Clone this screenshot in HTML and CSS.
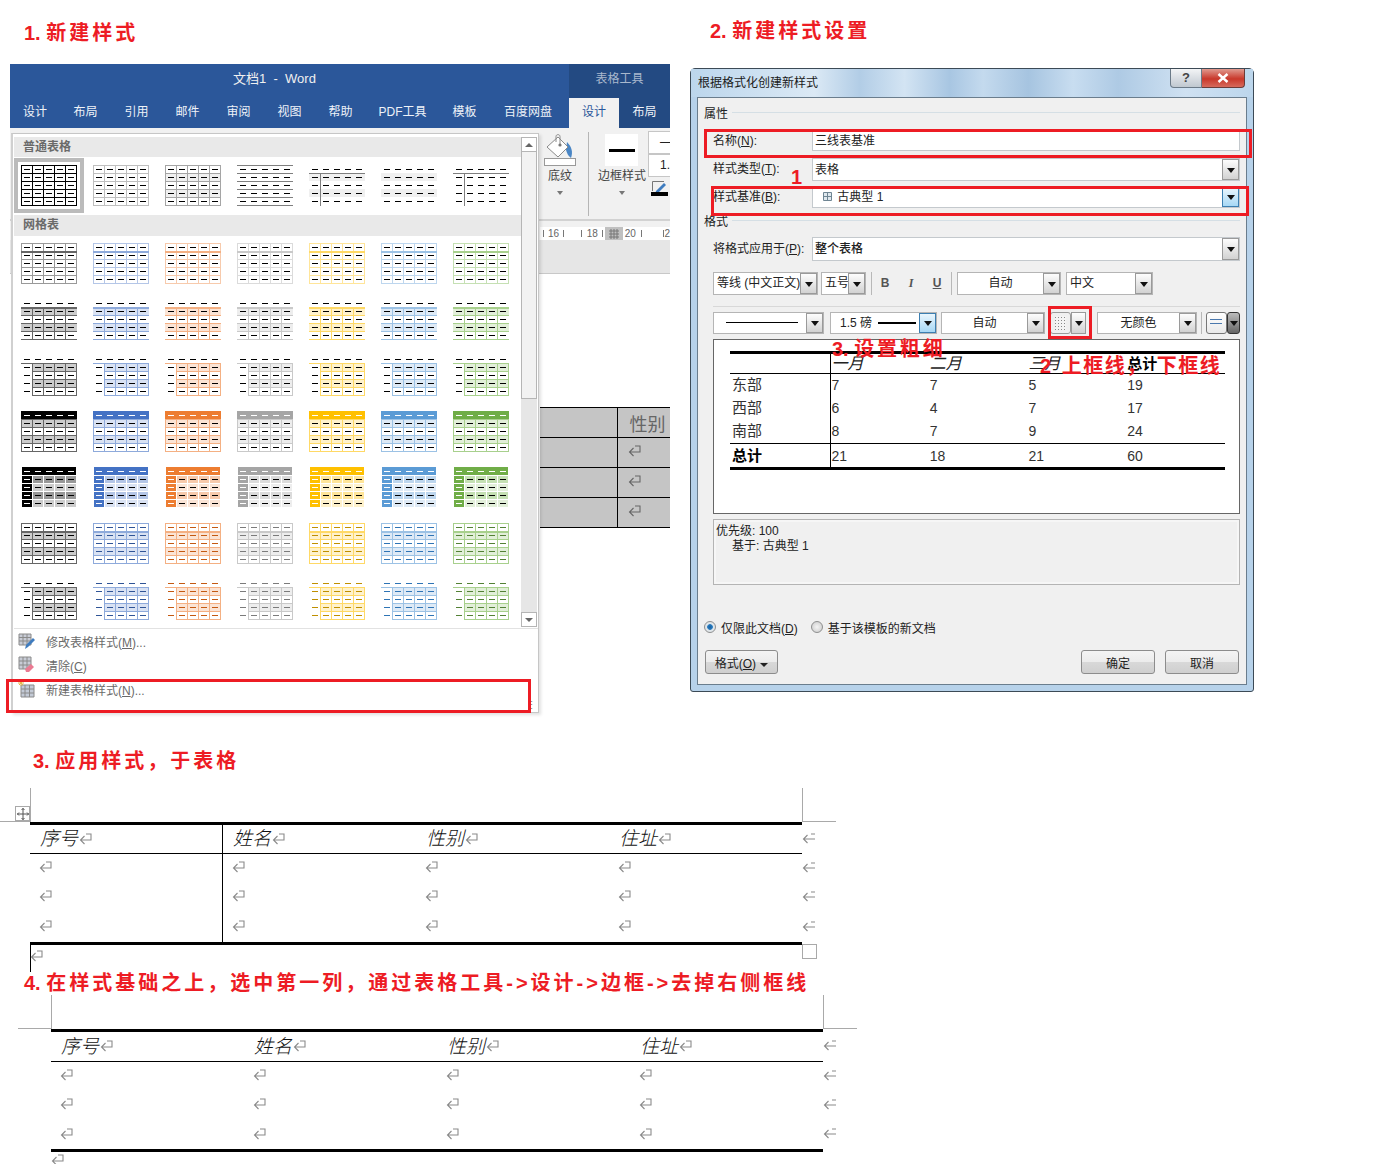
FILE: index.html
```html
<!DOCTYPE html>
<html lang="zh-CN">
<head>
  <meta charset="UTF-8">
  <title>三线表样式</title>
  <link rel="stylesheet" href="styles.css">
</head>
<body>

  <!-- shared icons -->
  <svg class="sprite" width="0" height="0">
    <symbol id="ret" viewBox="0 0 13 12"><path d="M7 1H12V7H1.5M5.5 3L1.5 7L5.5 11" fill="none" stroke="currentColor" stroke-width="1.1"/></symbol>
    <symbol id="ret-end" viewBox="0 0 13 12"><path d="M13 7H1.5M5.5 3L1.5 7L5.5 11M9 2H13" fill="none" stroke="currentColor" stroke-width="1.1"/></symbol>
  </svg>

  <div class="canvas">

    <h2 class="note note-1"><span class="num">1. </span>新建样式</h2>
    <h2 class="note note-2"><span class="num">2. </span>新建样式设置</h2>
    <h2 class="note note-3"><span class="num">3. </span>应用样式，于表格</h2>
    <h2 class="note note-4"><span class="num">4. </span>在样式基础之上，选中第一列，通过表格工具-&gt;设计-&gt;边框-&gt;去掉右侧框线</h2>

    <!-- Word 窗口 -->
    <div class="shot word">
      <div class="titlebar">
        <div class="doc-title">文档1&nbsp; - &nbsp;Word</div>
        <div class="tools-title">表格工具</div>
      </div>
      <div class="tabs">
        <span class="tab">设计</span>
        <span class="tab">布局</span>
        <span class="tab">引用</span>
        <span class="tab">邮件</span>
        <span class="tab">审阅</span>
        <span class="tab">视图</span>
        <span class="tab">帮助</span>
        <span class="tab tab-pdf">PDF工具</span>
        <span class="tab">模板</span>
        <span class="tab tab-pan">百度网盘</span>
        <span class="tab tab-active">设计</span>
        <span class="tab tab-dark">布局</span>
      </div>

      <div class="ribbon">
        <div class="rb-group rb-shade">
          <svg class="bucket" width="32" height="32" viewBox="0 0 32 32">
            <path d="M23 8C28 13 29 18 27 24C24 22 23 19 22 16Z" fill="#4a86c5"/>
            <path d="M14 3L24 13L14 23L3 13Z" fill="#fff" stroke="#8a8a8a"/>
            <path d="M12 8V2.5C12 0 16 0 16 2.5V11" fill="none" stroke="#8a8a8a"/>
            <circle cx="16" cy="11" r="1.6" fill="#777"/>
            <rect x="0.5" y="24.5" width="31" height="7" fill="#fff" stroke="#999"/>
          </svg>
          <span class="rb-label">底纹</span>
          <i class="rb-arrow"></i>
        </div>
        <div class="rb-sep"></div>
        <div class="rb-group rb-border">
          <div class="border-pick"><b></b></div>
          <span class="rb-label">边框样式</span>
          <i class="rb-arrow"></i>
        </div>
        <div class="rb-side">
          <div class="side-box">—</div>
          <div class="side-box">1.</div>
          <svg class="pen" width="17" height="17" viewBox="0 0 17 17">
            <path d="M1.5 11V1.5H13" fill="none" stroke="#777"/>
            <path d="M5 11L13 3L15 5L7 13L4 14Z" fill="#3f7cbf"/>
            <rect x="0" y="12" width="17" height="4" fill="#000"/>
          </svg>
        </div>
      </div>
      <div class="ruler">
        <div class="ruler-strip">
          <i class="tick t1"></i><span class="rl">16</span><i class="tick"></i><i class="tick t2"></i><span class="rl rl-b">18</span><i class="tick"></i>
          <span class="rl-box">
            <svg width="10" height="10" viewBox="0 0 10 10"><path d="M0 2H10M0 5H10M0 8H10M2 0V10M5 0V10M8 0V10" stroke="#777"/></svg>
          </span>
          <span class="rl rl-c">20</span><i class="tick t3"></i><i class="tick t4"></i><span class="rl rl-d">2</span>
        </div>
      </div>
      <div class="page-gap"></div>
      <div class="page">
        <table class="sel-table">
          <tr><td></td><td class="sel-big">性别</td></tr>
          <tr><td></td><td><svg class="ret"><use href="#ret"/></svg></td></tr>
          <tr><td></td><td><svg class="ret"><use href="#ret"/></svg></td></tr>
          <tr><td></td><td><svg class="ret"><use href="#ret"/></svg></td></tr>
        </table>
      </div>

      <!-- 表格样式下拉 -->
      <div class="gallery">
        <div class="gallery-main">
          <div class="gallery-list">
            <div class="band band-first">普通表格</div>
            <div class="plain-row" id="plainRow"></div>
            <div class="band">网格表</div>
            <div class="grid-rows" id="gridRows"></div>
          </div>
          <div class="scroll">
            <div class="scroll-btn"><i class="up"></i></div>
            <div class="scroll-thumb"></div>
            <div class="scroll-track"></div>
            <div class="scroll-btn"><i class="down"></i></div>
          </div>
        </div>
        <div class="menu">
          <div class="menu-item">
            <svg width="18" height="18" viewBox="0 0 18 18"><path d="M1 2H13V13H1ZM1 5.5H13M1 9H13M5 2V13M9 2V13" fill="#c8ccd6" stroke="#8a8a8a"/><path d="M7 17L8 13L15 6L17 8L10 15Z" fill="#3f7cbf"/></svg>
            <span>修改表格样式(<u>M</u>)...</span>
          </div>
          <div class="menu-item">
            <svg width="18" height="18" viewBox="0 0 18 18"><path d="M1 1H13V13H1ZM1 5H13M1 9H13M5 1V13M9 1V13" fill="#c8ccd6" stroke="#8a8a8a"/><path d="M7 13L13 8L16 11L11 16H8Z" fill="#ea7a92"/></svg>
            <span>清除(<u>C</u>)</span>
          </div>
          <div class="menu-item">
            <svg width="18" height="18" viewBox="0 0 18 18"><path d="M3 5H16V17H3ZM3 9H16M3 13H16M7 5V17M11.5 5V17" fill="#c3cad6" stroke="#8a8a8a"/><path d="M3 0V6M0 3H6M1 1L5 5M5 1L1 5" stroke="#e6b84d"/></svg>
            <span>新建表格样式(<u>N</u>)...</span>
          </div>
        </div>
        <div class="grip">⋮</div>
        <div class="red-box red-new"></div>
      </div>
    </div>

    <!-- 新建样式对话框 -->
    <div class="shot dialog">
      <div class="dlg-title">
        <span>根据格式化创建新样式</span>
        <div class="dlg-btns">
          <span class="dlg-help">?</span>
          <span class="dlg-close">
            <svg width="12" height="10" viewBox="0 0 12 10"><path d="M1.5 1L10.5 9M10.5 1L1.5 9" stroke="#fff" stroke-width="2.5"/></svg>
          </span>
        </div>
      </div>
      <div class="dlg-panel">
        <div class="legend"><span>属性</span></div>
        <div class="field f-name">
          <label>名称(<u>N</u>):</label>
          <div class="input">三线表基准</div>
        </div>
        <div class="field f-type">
          <label>样式类型(<u>T</u>):</label>
          <div class="input">表格<span class="drop"></span></div>
        </div>
        <div class="field f-base">
          <label>样式基准(<u>B</u>):</label>
          <div class="input input-base">
            <svg width="9" height="9" viewBox="0 0 9 9"><path d="M0.5 0.5H8.5V8.5H0.5ZM0.5 4.5H8.5M4.5 0.5V8.5" fill="#dfe8ee" stroke="#6f8593"/></svg>
            古典型 1<span class="drop drop-hot"></span>
          </div>
        </div>
        <div class="legend legend-fmt"><span>格式</span></div>
        <div class="field f-apply">
          <label>将格式应用于(<u>P</u>):</label>
          <div class="input">整个表格<span class="drop"></span></div>
        </div>

        <div class="tool-row tool-1">
          <div class="combo w-font">等线 (中文正文)<span class="drop"></span></div>
          <div class="combo w-size">五号<span class="drop"></span></div>
          <div class="vsep vsep-a"></div>
          <span class="fmt fmt-b">B</span>
          <span class="fmt fmt-i">I</span>
          <span class="fmt fmt-u">U</span>
          <div class="vsep vsep-b"></div>
          <div class="combo w-color center">自动<span class="drop"></span></div>
          <div class="combo w-lang">中文<span class="drop"></span></div>
        </div>
        <div class="hsep"></div>
        <div class="tool-row tool-2">
          <div class="combo w-line"><b class="line-thin"></b><span class="drop"></span></div>
          <div class="combo w-wt">1.5 磅<b class="line-thick"></b><span class="drop drop-hot"></span></div>
          <div class="combo w-color2 center">自动<span class="drop"></span></div>
          <div class="border-btn">
            <span class="border-ico"></span><span class="drop drop-mini"></span>
          </div>
          <div class="combo w-fill center">无颜色<span class="drop"></span></div>
          <div class="vsep vsep-c"></div>
          <div class="view-btn">
            <span class="view-ico"></span><span class="drop drop-dark"></span>
          </div>
        </div>

        <div class="preview">
          <table class="pv-table">
            <tr class="pv-head"><td></td><td class="col1"><i>一月</i></td><td><i>二月</i></td><td><i>三月</i></td><td><b>总计</b></td></tr>
            <tr><td>东部</td><td class="col1">7</td><td>7</td><td>5</td><td>19</td></tr>
            <tr><td>西部</td><td class="col1">6</td><td>4</td><td>7</td><td>17</td></tr>
            <tr class="pv-last"><td>南部</td><td class="col1">8</td><td>7</td><td>9</td><td>24</td></tr>
            <tr class="pv-total"><td><b>总计</b></td><td class="col1">21</td><td>18</td><td>21</td><td>60</td></tr>
          </table>
        </div>
        <div class="desc">
          <div>优先级: 100</div>
          <div class="desc-sub">基于: 古典型 1</div>
        </div>
        <div class="radios">
          <span class="radio radio-on"></span><span class="radio-text">仅限此文档(<u>D</u>)</span>
          <span class="radio"></span><span>基于该模板的新文档</span>
        </div>
        <div class="dlg-foot">
          <button class="btn btn-fmt">格式(<u>O</u>) <i class="caret"></i></button>
          <button class="btn btn-ok">确定</button>
          <button class="btn">取消</button>
        </div>
      </div>

      <div class="red-box red-name"></div>
      <div class="red-box red-base"></div>
      <div class="red-box red-border"></div>
      <span class="mark mark-1">1</span>
      <span class="mark mark-3"><span class="num">3. </span>设置粗细</span>
      <span class="mark mark-2">2 上框线， 下框线</span>
    </div>

    <!-- 应用后的表格 -->
    <div class="shot doc doc-3">
      <div class="move"><svg width="12" height="12" viewBox="0 0 12 12"><path d="M6 0V12M0 6H12M4.5 2L6 0.5L7.5 2M4.5 10L6 11.5L7.5 10M2 4.5L0.5 6L2 7.5M10 4.5L11.5 6L10 7.5" fill="none" stroke="#555"/></svg></div>
      <table class="doc-table first-col">
        <tr class="doc-head">
          <td><i>序号</i><svg class="ret"><use href="#ret"/></svg></td>
          <td><i>姓名</i><svg class="ret"><use href="#ret"/></svg></td>
          <td><i>性别</i><svg class="ret"><use href="#ret"/></svg></td>
          <td><i>住址</i><svg class="ret"><use href="#ret"/></svg></td>
          <td class="end"><svg class="ret"><use href="#ret-end"/></svg></td>
        </tr>
        <tr>
          <td><svg class="ret"><use href="#ret"/></svg></td><td><svg class="ret"><use href="#ret"/></svg></td><td><svg class="ret"><use href="#ret"/></svg></td><td><svg class="ret"><use href="#ret"/></svg></td>
          <td class="end"><svg class="ret"><use href="#ret-end"/></svg></td>
        </tr>
        <tr>
          <td><svg class="ret"><use href="#ret"/></svg></td><td><svg class="ret"><use href="#ret"/></svg></td><td><svg class="ret"><use href="#ret"/></svg></td><td><svg class="ret"><use href="#ret"/></svg></td>
          <td class="end"><svg class="ret"><use href="#ret-end"/></svg></td>
        </tr>
        <tr class="doc-last">
          <td><svg class="ret"><use href="#ret"/></svg></td><td><svg class="ret"><use href="#ret"/></svg></td><td><svg class="ret"><use href="#ret"/></svg></td><td><svg class="ret"><use href="#ret"/></svg></td>
          <td class="end"><svg class="ret"><use href="#ret-end"/></svg></td>
        </tr>
      </table>
      <div class="resize"></div>
      <div class="caret-line"></div>
      <svg class="ret ret-after"><use href="#ret"/></svg>
    </div>

    <div class="shot doc doc-4">
      <table class="doc-table">
        <tr class="doc-head">
          <td><i>序号</i><svg class="ret"><use href="#ret"/></svg></td>
          <td><i>姓名</i><svg class="ret"><use href="#ret"/></svg></td>
          <td><i>性别</i><svg class="ret"><use href="#ret"/></svg></td>
          <td><i>住址</i><svg class="ret"><use href="#ret"/></svg></td>
          <td class="end"><svg class="ret"><use href="#ret-end"/></svg></td>
        </tr>
        <tr>
          <td><svg class="ret"><use href="#ret"/></svg></td><td><svg class="ret"><use href="#ret"/></svg></td><td><svg class="ret"><use href="#ret"/></svg></td><td><svg class="ret"><use href="#ret"/></svg></td>
          <td class="end"><svg class="ret"><use href="#ret-end"/></svg></td>
        </tr>
        <tr>
          <td><svg class="ret"><use href="#ret"/></svg></td><td><svg class="ret"><use href="#ret"/></svg></td><td><svg class="ret"><use href="#ret"/></svg></td><td><svg class="ret"><use href="#ret"/></svg></td>
          <td class="end"><svg class="ret"><use href="#ret-end"/></svg></td>
        </tr>
        <tr class="doc-last">
          <td><svg class="ret"><use href="#ret"/></svg></td><td><svg class="ret"><use href="#ret"/></svg></td><td><svg class="ret"><use href="#ret"/></svg></td><td><svg class="ret"><use href="#ret"/></svg></td>
          <td class="end"><svg class="ret"><use href="#ret-end"/></svg></td>
        </tr>
      </table>
      <svg class="ret ret-after"><use href="#ret"/></svg>
    </div>

  </div>

  <script src="script.js"></script>
</body>
</html>
```

FILE: styles.css
```css
* {
  box-sizing: border-box;
}

body {
  margin: 0;
  background-color: #fff;
  font-family: "Liberation Sans", "Noto Sans CJK SC", sans-serif;
  font-size: 12px;
  color: #222;
}

.sprite {
  position: absolute;
}

.canvas {
  position: relative;
  width: 1380px;
  height: 1164px;
  overflow: hidden;
}

.shot {
  position: absolute;
}

/* red headings */
.note {
  position: absolute;
  margin: 0;
  font-size: 20px;
  line-height: 26px;
  font-weight: 700;
  letter-spacing: 3px;
  color: #ed1c24;
  white-space: nowrap;
}

.num {
  letter-spacing: 0;
}

.note-1 { left: 24px; top: 20px; }
.note-2 { left: 710px; top: 18px; }
.note-3 { left: 33px; top: 748px; }
.note-4 { left: 24px; top: 970px; }

.red-box {
  position: absolute;
  border: 3px solid #ed1c24;
}

/* word window */
.word {
  left: 10px;
  top: 64px;
  width: 660px;
  height: 464px;
}

.titlebar {
  display: flex;
  height: 34px;
  background-color: #2b579a;
}

.doc-title {
  flex: 1;
  padding-right: 30px;
  line-height: 29px;
  font-size: 13px;
  text-align: center;
  color: #f0f0f0;
}

.tools-title {
  width: 101px;
  line-height: 30px;
  text-align: center;
  background-color: #234a82;
  color: #a9b8cd;
}

.tabs {
  display: flex;
  height: 30px;
  background-color: #2b579a;
}

.tab {
  width: 51px;
  line-height: 28px;
  text-align: center;
  color: #eef2f8;
}

.tab:first-child { width: 50px; }
.tab-pdf { width: 73px; }
.tab-pan { width: 79px; padding-right: 3px; }

.tab-active {
  width: 50px;
  background-color: #f1f1f1;
  color: #2b579a;
}

.tab-dark {
  background-color: #234a82;
}

.ribbon {
  display: flex;
  height: 93px;
  padding-left: 534px;
  background-color: #f1f1f1;
  border-bottom: 2px solid #d2d2d2;
  overflow: hidden;
}

.rb-group {
  display: flex;
  flex-direction: column;
  align-items: center;
  padding-top: 6px;
}

.rb-shade { width: 32px; }
.rb-border { width: 52px; margin-left: 9px; }

.rb-sep {
  width: 1px;
  height: 84px;
  margin: 4px 0 0 12px;
  background-color: #b5b5b5;
}

.rb-label {
  margin-top: 2px;
  line-height: 17px;
  color: #444;
  white-space: nowrap;
}

.rb-arrow {
  width: 0;
  height: 0;
  margin-top: 6px;
  border: 3px solid transparent;
  border-top: 4px solid #777;
}

.border-pick {
  display: flex;
  align-items: center;
  justify-content: center;
  width: 33px;
  height: 32px;
  flex: none;
  background-color: #fff;
}

.border-pick b {
  width: 26px;
  height: 3px;
  background-color: #000;
}

.rb-side {
  display: flex;
  flex-direction: column;
  flex: none;
  width: 22px;
  margin-left: 2px;
  padding-top: 3px;
}

.side-box {
  height: 23px;
  padding-left: 11px;
  background-color: #fff;
  border: 1px solid #c6c6c6;
  border-right: 0;
  line-height: 20px;
  overflow: hidden;
}

.pen {
  margin: 3px 0 0 3px;
}

.ruler {
  height: 19px;
  padding: 6px 0 0 530px;
  background-color: #f1f1f1;
}

.ruler-strip {
  display: flex;
  align-items: center;
  height: 13px;
  background-color: #fff;
}

.tick {
  width: 1px;
  height: 7px;
  margin-left: 4px;
  background-color: #777;
}

.t1 { margin-left: 3px; }
.t2 { margin-left: 17px; }
.t3 { margin-left: 5px; }
.t4 { margin-left: 21px; }

.rl {
  width: 11px;
  margin-left: 4px;
  line-height: 13px;
  font-size: 10px;
  color: #666;
  text-align: center;
}

.rl-b { margin-left: 5px; }
.rl-c { margin-left: 2px; }
.rl-d { width: 6px; margin-left: 1px; }

.rl-box {
  display: flex;
  align-items: center;
  justify-content: center;
  width: 20px;
  height: 13px;
  margin-left: 2px;
  background-color: #c0c0c0;
}

.page-gap {
  height: 34px;
  background-color: #e6e6e6;
  border-bottom: 1px solid #c8c8c8;
}

.page {
  padding: 133px 0 0 530px;
  background-color: #fff;
}

.sel-table {
  width: 130px;
  table-layout: fixed;
  border-collapse: collapse;
  background-color: #c5c5c5;
}

.sel-table td {
  height: 30px;
  padding: 0 0 0 10px;
  border-top: 1px solid #000;
  border-bottom: 1px solid #000;
  color: #666;
  white-space: nowrap;
  overflow: hidden;
}

.sel-table td:first-child {
  width: 77px;
  border-right: 1.5px solid #000;
}

.sel-table .ret {
  margin-top: -4px;
  color: #666;
}

.sel-big {
  font-size: 18px;
  color: #333;
  padding-left: 12px !important;
}

/* style gallery */
.gallery {
  position: absolute;
  left: 1px;
  top: 69px;
  width: 528px;
  height: 580px;
  padding: 3px 0 0 1px;
  background-color: #fff;
  border: 1px solid #c6c6c6;
  border-left: 2px solid #d0d0d0;
  box-shadow: 2px 2px 3px rgba(0, 0, 0, 0.12);
}

.gallery-main {
  display: flex;
  height: 490px;
}

.gallery-list {
  width: 507px;
  overflow: hidden;
}

.band {
  height: 21px;
  padding-left: 9px;
  line-height: 21px;
  font-weight: 700;
  color: #6a6a6a;
  background-color: #e9e9e9;
}

.band-first {
  height: 20px;
}

.plain-row {
  display: grid;
  grid-template-columns: repeat(7, 56px);
  column-gap: 16px;
  height: 58px;
  padding: 8px 0 0 7px;
}

.grid-rows {
  display: grid;
  grid-template-columns: repeat(7, 56px);
  column-gap: 16px;
  row-gap: 15px;
  padding: 7px 0 0 7px;
}

.thumb {
  display: block;
}

.thumb-sel {
  outline: 4px solid #bbb;
  outline-offset: 3px;
}

.scroll {
  display: flex;
  flex-direction: column;
  width: 16px;
}

.scroll-btn {
  display: flex;
  align-items: center;
  justify-content: center;
  height: 15px;
  background-color: #fff;
  border: 1px solid #b5b5b5;
}

.scroll-btn i {
  width: 0;
  height: 0;
  border: 4px solid transparent;
}

.scroll-btn .up {
  margin-top: -4px;
  border-bottom: 4px solid #666;
}

.scroll-btn .down {
  margin-top: 4px;
  border-top: 4px solid #666;
}

.scroll-thumb {
  height: 247px;
  background-color: #f2f2f2;
  border: 1px solid #b5b5b5;
  border-top: 0;
}

.scroll-track {
  flex: 1;
  background-color: #e6e6e6;
}

.menu {
  margin-top: 1px;
  border-top: 1px solid #e2e2e2;
}

.menu-item {
  display: flex;
  align-items: center;
  height: 24px;
  padding-left: 4px;
  color: #6a6a6a;
}

.menu-item span {
  margin-left: 10px;
}

.grip {
  position: absolute;
  right: 1px;
  bottom: 1px;
  line-height: 12px;
  font-size: 11px;
  color: #888;
}

.red-new {
  left: -7px;
  top: 545px;
  width: 525px;
  height: 34px;
}

/* dialog */
.dialog {
  left: 690px;
  top: 68px;
  width: 564px;
  height: 624px;
  padding: 0 6px 6px;
  background-color: #b7d2ea;
  border: 1px solid #3c4a56;
  border-radius: 5px 5px 3px 3px;
}

.dlg-title {
  display: flex;
  justify-content: space-between;
  height: 28px;
  margin: 0 -6px;
  padding-left: 7px;
  line-height: 29px;
  color: #1a1a1a;
  background-image: linear-gradient(90deg, #bcd6ec, #dbe9f5 22%, #b2cde6 30%, #d3e4f3 38%, #a8c6e2 46%, #c4daee 52%, #a6c4e0 60%, #c8ddf0 68%, #aecae4 76%, #cfe1f2 88%, #bcd6ec);
}

.dlg-btns {
  display: flex;
  margin-right: 8px;
  height: 19px;
}

.dlg-help {
  width: 32px;
  line-height: 18px;
  text-align: center;
  font-size: 13px;
  font-weight: 700;
  color: #444;
  background-image: linear-gradient(#f3f4f6, #c0c8d0);
  border: 1px solid #6b7a88;
  border-top: 0;
  border-radius: 0 0 0 4px;
}

.dlg-close {
  display: flex;
  align-items: center;
  justify-content: center;
  width: 43px;
  background-image: linear-gradient(#e09a8f, #c9382b 55%, #d66a5c);
  border: 1px solid #6b3b38;
  border-top: 0;
  border-left: 0;
  border-radius: 0 0 4px 0;
}

.dlg-panel {
  height: 588px;
  padding: 6px 6px 0 6px;
  background-color: #f0f0f0;
  border: 1px solid #6a7d8d;
}

.legend {
  display: flex;
  align-items: center;
  height: 16px;
  color: #222;
}

.legend::after {
  content: "";
  flex: 1;
  height: 1px;
  margin: 0 0 0 4px;
  background-color: #d5dfe5;
}

.legend-fmt {
  margin-top: 4px;
}

.field {
  display: flex;
  align-items: stretch;
  padding-left: 9px;
}

.field label {
  width: 99px;
  flex: none;
  line-height: 22px;
}

.input {
  position: relative;
  flex: 1;
  padding-left: 2px;
  background-color: #fff;
  border: 1px solid #c4c9cd;
  line-height: 20px;
}

.f-name { height: 21px; margin-top: 10px; }
.f-type { height: 23px; margin-top: 7px; }
.f-base { height: 22px; margin-top: 5px; }
.f-apply { height: 24px; margin-top: 9px; }

.f-apply label { line-height: 24px; }
.f-apply .input { font-weight: 500; line-height: 23px; }
.f-type .input { line-height: 22px; }
.f-base .input { line-height: 21px; }

.input-base {
  padding-left: 10px;
}

.input-base svg {
  margin-right: 2px;
}

.drop {
  position: absolute;
  top: 0;
  right: 0;
  bottom: 0;
  width: 17px;
  background-image: linear-gradient(#fdfdfd, #d2d2d2);
  border: 1px solid #9a9a9a;
}

.drop::after {
  content: "";
  position: absolute;
  left: 4px;
  top: 50%;
  margin-top: -2px;
  border: 4px solid transparent;
  border-bottom: 0;
  border-top: 5px solid #111;
}

.drop-hot {
  background-image: linear-gradient(#eaf6fd, #a7d8f5);
  border-color: #3c7fb1;
}

.drop-mini {
  width: 15px;
}

.drop-mini::after { left: 3px; }

.drop-dark {
  width: 13px;
  background-image: linear-gradient(#bbb, #666);
  border-color: #333;
  border-radius: 3px;
}

.drop-dark::after { left: 2px; }

.tool-row {
  display: flex;
  align-items: stretch;
  margin-left: 9px;
}

.tool-1 { height: 23px; margin-top: 11px; }
.tool-2 { height: 22px; margin-top: 5px; }

.combo {
  position: relative;
  flex: none;
  padding-left: 3px;
  background-color: #fff;
  border: 1px solid #b5b5b5;
  line-height: 20px;
  white-space: nowrap;
}

.center {
  padding: 0 17px 0 0;
  text-align: center;
}

.w-font { width: 105px; }
.w-size { width: 45px; margin-left: 3px; }
.w-color { width: 104px; }
.w-lang { width: 87px; margin-left: 5px; }
.w-line { width: 111px; }
.w-wt { width: 107px; margin-left: 6px; padding-left: 9px; }
.w-color2 { width: 104px; margin-left: 4px; }
.w-fill { width: 100px; margin-left: 11px; }

.vsep {
  width: 1px;
  background-color: #b8b8b8;
}

.vsep-a { margin: 0 0 0 5px; }
.vsep-b { margin: 0 5px 0 1px; }
.vsep-c { margin: 0 4px 0 4px; }

.fmt {
  width: 26px;
  line-height: 23px;
  text-align: center;
  font-weight: 700;
  color: #555;
}

.fmt-i { font-style: italic; font-family: "Liberation Serif", serif; }
.fmt-u { text-decoration: underline; }

.hsep {
  height: 1px;
  margin: 11px 0 0 9px;
  background-color: #d8d8d8;
}

.line-thin {
  display: block;
  width: 72px;
  height: 1px;
  margin: 9px 0 0 9px;
  background-color: #000;
}

.line-thick {
  position: absolute;
  left: 47px;
  top: 9px;
  width: 38px;
  height: 2px;
  background-color: #000;
}

.border-btn {
  position: relative;
  flex: none;
  width: 36px;
  margin-left: 5px;
}

.border-ico {
  display: block;
  width: 21px;
  height: 100%;
  background-color: #f4f4f4;
  border: 1px solid #9a9a9a;
  border-radius: 3px;
  background-image: radial-gradient(#888 0.5px, transparent 0.6px);
  background-size: 3px 3px;
  background-clip: content-box;
  padding: 3px 4px;
}

.view-btn {
  position: relative;
  flex: none;
  width: 34px;
}

.view-ico {
  display: block;
  width: 21px;
  height: 100%;
  background-image: linear-gradient(#4a78ad, #4a78ad), linear-gradient(#4a78ad, #4a78ad), linear-gradient(#fff, #e9e9e9);
  background-size: 12px 1px, 12px 1px, 100% 100%;
  background-position: 3px 6px, 3px 10px, 0 0;
  background-repeat: no-repeat;
  border: 1px solid #777;
  border-radius: 3px;
}

.preview {
  height: 175px;
  margin: 5px 0 0 9px;
  padding: 11px 14px 0 16px;
  background-color: #fff;
  border: 1px solid #666;
}

.pv-table {
  width: 495px;
  table-layout: fixed;
  border-collapse: collapse;
  border-top: 3px solid #000;
  border-bottom: 3px solid #000;
  font-size: 14px;
  color: #333;
}

.pv-table td {
  height: 23px;
  padding: 0 0 0 1px;
  line-height: 16px;
  white-space: nowrap;
}

.pv-table td:first-child {
  width: 100px;
  padding-left: 2px;
  font-size: 15px;
}

.pv-table .col1 {
  border-left: 1px solid #000;
}

.pv-head td {
  height: 21px;
  border-bottom: 1px solid #000;
}

.pv-head i {
  font-size: 16px;
  color: #222;
}

.pv-table b {
  font-size: 15px;
  color: #000;
}

.pv-last td {
  height: 24px;
  border-bottom: 1px solid #000;
}

.pv-total td {
  height: 25px;
}

.desc {
  height: 66px;
  margin: 5px 0 0 9px;
  padding: 4px 2px;
  border: 1px solid #b4b4b4;
  line-height: 15px;
  color: #222;
  box-shadow: inset 0 0 0 2px #f6f6f6;
}

.desc-sub {
  padding-left: 16px;
}

.radios {
  display: flex;
  align-items: center;
  height: 16px;
  margin-top: 34px;
}

.radio {
  width: 12px;
  height: 12px;
  margin-right: 5px;
  border-radius: 50%;
  background-image: radial-gradient(#f4f4f4, #c9c9c9);
  border: 1px solid #8e8f8f;
}

.radio-on {
  background-image: radial-gradient(#17609f 0, #2a7cc0 35%, #e0e6ea 45%);
}

.radio-text {
  margin-right: 13px;
}

.dlg-foot {
  display: flex;
  height: 24px;
  margin-top: 15px;
  padding: 0 1px;
}

.btn {
  width: 74px;
  height: 24px;
  margin-left: 10px;
  padding: 0;
  font: inherit;
  color: #222;
  background-image: linear-gradient(#f4f4f4, #ececec 48%, #d8d8d8 52%, #cfcfcf);
  border: 1px solid #8c8c8c;
  border-radius: 3px;
}

.btn-fmt {
  width: 73px;
  margin-left: 0;
}

.btn-ok {
  margin-left: auto;
}

.caret {
  display: inline-block;
  margin-left: 1px;
  vertical-align: 1px;
  border: 4px solid transparent;
  border-bottom: 0;
  border-top: 4px solid #222;
}

.red-name { left: 13px; top: 60px; width: 548px; height: 29px; }
.red-base { left: 20px; top: 117px; width: 538px; height: 30px; }
.red-border { left: 357px; top: 237px; width: 44px; height: 33px; }

.mark {
  position: absolute;
  font-size: 20px;
  line-height: 24px;
  font-weight: 700;
  color: #ed1c24;
  white-space: nowrap;
}

.mark-1 { left: 100px; top: 96px; }
.mark-3 { left: 141px; top: 268px; letter-spacing: 2.8px; }
.mark-2 { left: 349px; top: 285px; letter-spacing: 1.5px; word-spacing: 2px; }

/* document tables */
.doc {
  width: 800px;
  height: 140px;
}

.doc-3 { left: 30px; top: 822px; }
.doc-4 { left: 51px; top: 1029px; }

.doc::before,
.doc::after {
  content: "";
  position: absolute;
  top: -34px;
  width: 33px;
  height: 33px;
}

.doc::before {
  left: -33px;
  border-right: 1px solid #a9a9a9;
  border-bottom: 1px solid #a9a9a9;
}

.doc::after {
  left: 772px;
  border-left: 1px solid #a9a9a9;
  border-bottom: 1px solid #a9a9a9;
}

.doc-table {
  table-layout: fixed;
  width: 792px;
  border-collapse: separate;
  border-spacing: 0;
}

.doc-table td {
  width: 193px;
  height: 29px;
  padding: 0 0 5px 9px;
  vertical-align: middle;
  white-space: nowrap;
}

.doc-table .end {
  width: 20px;
  padding-left: 0;
  padding-bottom: 4px;
}

.doc-head td {
  height: 32px;
  padding-bottom: 0;
  border-top: 3px solid #000;
  border-bottom: 1px solid #000;
}

.doc-4 .doc-head td {
  height: 33px;
}

.doc-head td.end {
  border: 0;
  padding-bottom: 2px;
}

.doc-head i {
  margin-left: 1px;
  font-size: 19px;
  line-height: 26px;
  font-weight: 300;
  color: #111;
}

.doc-head .ret {
  margin: -6px 0 0 1px;
}

.doc-head .end .ret {
  margin: 0;
}

.doc-last td {
  height: 33px;
  padding-bottom: 3px;
  border-bottom: 3px solid #000;
}

.doc-4 .doc-last td {
  height: 32px;
}

.doc-last td.end {
  padding-bottom: 7px;
  border: 0;
}

.first-col tr td:first-child {
  border-right: 1px solid #000;
}

.ret {
  display: inline-block;
  width: 13px;
  height: 12px;
  vertical-align: middle;
  color: #8a8a8a;
}

.move {
  position: absolute;
  left: -15px;
  top: -16px;
  display: flex;
  align-items: center;
  justify-content: center;
  width: 15px;
  height: 15px;
  background-color: #fff;
  border: 1px solid #a9a9a9;
  z-index: 1;
}

.resize {
  position: absolute;
  left: 772px;
  top: 122px;
  width: 15px;
  height: 15px;
  border: 1px solid #a9a9a9;
}

.caret-line {
  position: absolute;
  left: 0;
  top: 123px;
  width: 1px;
  height: 27px;
  background-color: #000;
}

.ret-after {
  position: absolute;
  left: 0;
  top: 128px;
}

.doc-4 .ret-after {
  top: 125px;
}
```

FILE: script.js
```javascript
// palette of the seven style columns: accent, mid, light, pale, dash
const palette = [
  ['#000000', '#666666', '#999999', '#cccccc', '#000000'],
  ['#4472c4', '#8eaadb', '#b4c6e7', '#d9e2f3', '#2f5496'],
  ['#ed7d31', '#f4b083', '#f7caac', '#fbe4d5', '#c45911'],
  ['#a5a5a5', '#c9c9c9', '#dbdbdb', '#ededed', '#7b7b7b'],
  ['#ffc000', '#ffd966', '#ffe599', '#fff2cc', '#bf8f00'],
  ['#5b9bd5', '#9cc2e5', '#bdd6ee', '#deeaf6', '#2e74b5'],
  ['#70ad47', '#a8d08d', '#c5e0b3', '#e2efd9', '#538135']
];

const XS = [0, 11, 22, 33, 44, 55];
const YS = [0, 8, 16, 24, 32, 40];

function rect(x, y, w, h, fill) {
  return `<rect x="${x}" y="${y}" width="${w}" height="${h}" fill="${fill}"/>`;
}

function hline(y, x0, color, thick) {
  return rect(XS[x0], y, 56 - XS[x0], thick || 1, color);
}

function vline(x, y0, color) {
  return rect(x, YS[y0], 1, 41 - YS[y0], color);
}

// boxes from column c0 / row r0 to the far corner
function lattice(c0, r0, color) {
  let out = '';
  XS.slice(c0).forEach(x => { out += vline(x, r0, color); });
  YS.slice(r0).forEach(y => { out += hline(y, c0, color); });
  return out;
}

function bands(c0, fill) {
  return rect(XS[c0], YS[1], 56 - XS[c0], 8, fill) + rect(XS[c0], YS[3], 56 - XS[c0], 8, fill);
}

// colorFor(row, col) decides each cell's dash
function dashes(colorFor) {
  let out = '';
  for (let r = 0; r < 5; r++) {
    for (let c = 0; c < 5; c++) {
      out += rect(XS[c] + 3, YS[r] + 4, 6, 1, colorFor(r, c));
    }
  }
  return out;
}

const black = () => '#000';

const plainStyles = [
  () => lattice(0, 0, '#000') + dashes(black),
  () => lattice(0, 0, '#bfbfbf') + dashes(black),
  () => bands(0, '#f0f0f0') + lattice(0, 0, '#a5a5a5') + dashes(black),
  () => YS.map(y => hline(y, 0, '#7f7f7f')).join('') + dashes(black),
  () => bands(0, '#f0f0f0') + hline(8, 0, '#7f7f7f') + vline(11, 1, '#7f7f7f') + dashes(black),
  () => bands(0, '#f0f0f0') + dashes(black),
  () => hline(8, 0, '#7f7f7f') + vline(11, 1, '#7f7f7f') + dashes(black)
];

const gridStyles = [
  p => lattice(0, 0, p[2]) + hline(8, 0, p[1], 2) + dashes(black),
  p => {
    let out = bands(0, p[3]);
    XS.slice(1, 5).forEach(x => { out += vline(x, 1, p[1]); });
    YS.slice(2).forEach(y => { out += hline(y, 0, p[1]); });
    return out + hline(8, 0, p[1], 2) + dashes(black);
  },
  p => bands(1, p[3]) + lattice(1, 1, p[1]) + hline(8, 0, p[1]) + dashes(black),
  p => bands(0, p[3]) + lattice(0, 0, p[1]) + rect(0, 0, 56, 8, p[0]) + dashes(r => r === 0 ? '#fff' : '#000'),
  p => {
    let out = rect(1, 0, 54, 8, p[0]);
    for (let r = 1; r < 5; r++) {
      out += rect(1, YS[r] + 1, 10, 7, p[0]);
      for (let c = 1; c < 5; c++) {
        out += rect(XS[c] + 1, YS[r] + 1, 10, 7, r % 2 ? p[2] : p[3]);
      }
    }
    return out + dashes((r, c) => (r === 0 || c === 0) ? '#fff' : '#000');
  },
  p => bands(0, p[3]) + lattice(0, 0, p[1]) + hline(8, 0, p[1], 2) + dashes(() => p[4]),
  p => bands(1, p[3]) + lattice(1, 1, p[1]) + hline(8, 0, p[1]) + dashes(() => p[4])
];

function thumb(body, cls) {
  return `<svg class="thumb ${cls || ''}" width="56" height="41" viewBox="0 0 56 41" shape-rendering="crispEdges">${body}</svg>`;
}

document.getElementById('plainRow').innerHTML =
  plainStyles.map((draw, i) => thumb(draw(), i === 0 ? 'thumb-sel' : '')).join('');

document.getElementById('gridRows').innerHTML =
  gridStyles.map(draw => palette.map(p => thumb(draw(p))).join('')).join('');
```
